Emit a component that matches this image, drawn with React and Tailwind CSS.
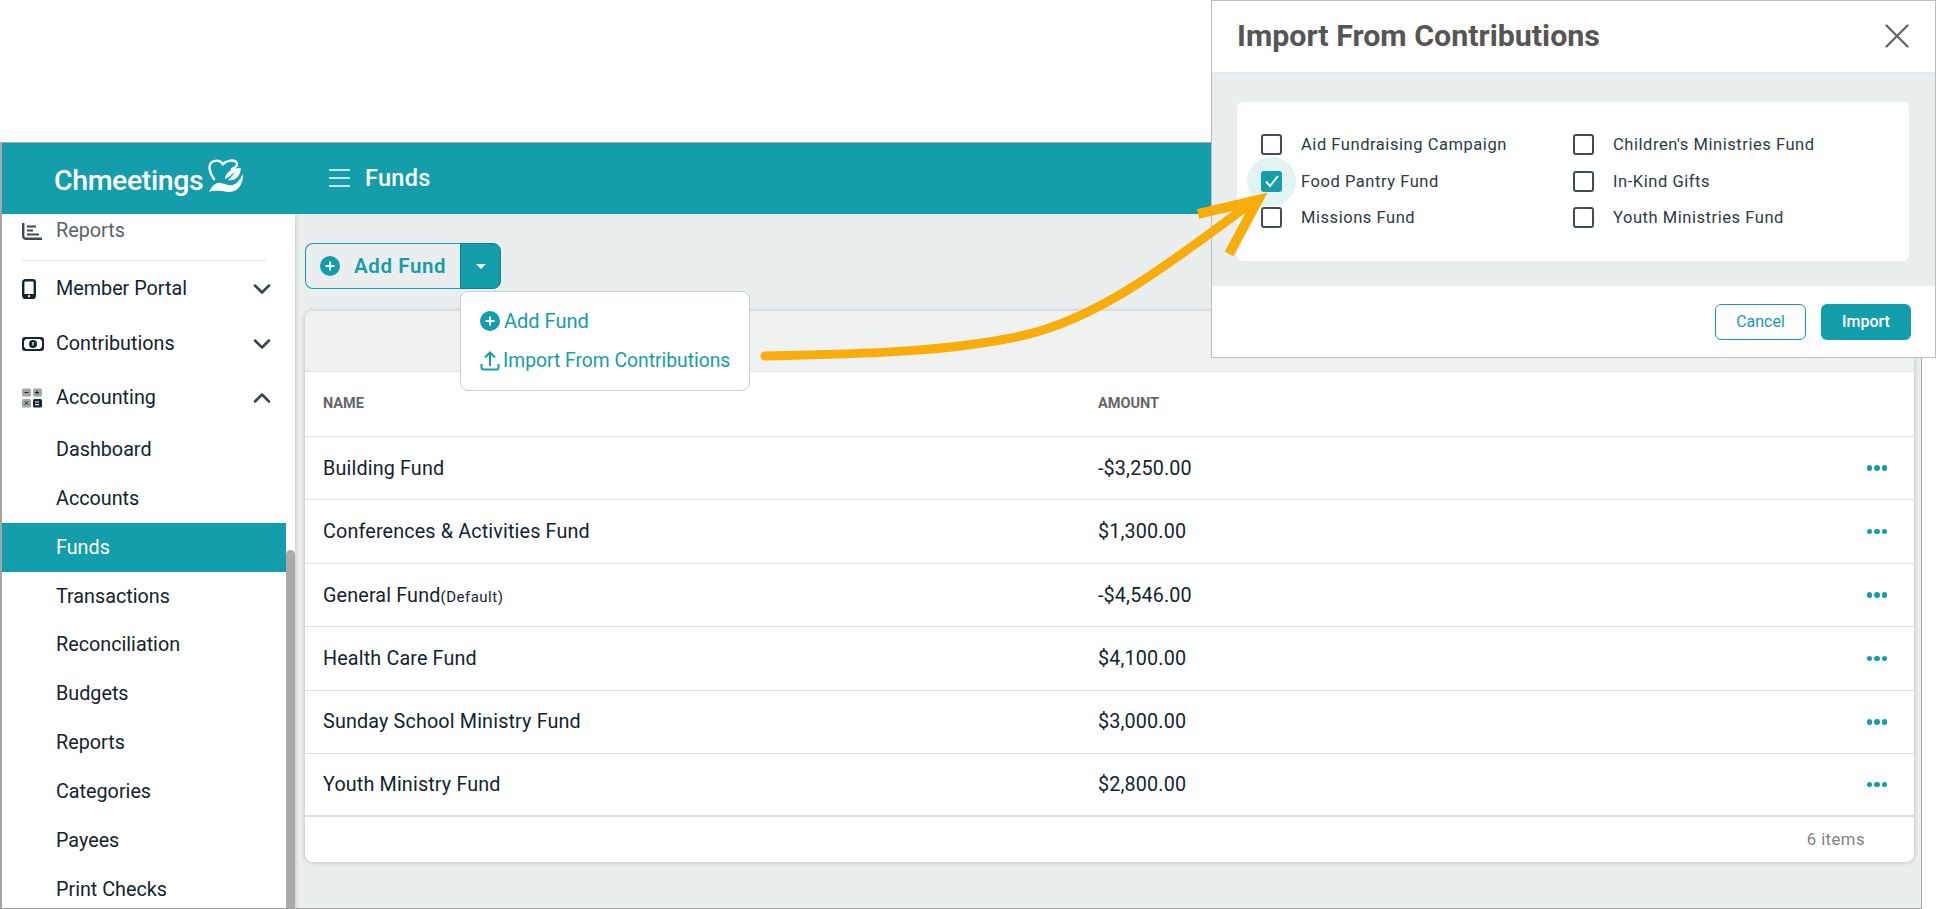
import { ChevronDown, ChevronUp, X } from "lucide-react";

const font = { fontFamily: "Roboto, sans-serif" };

const PlusCircle = ({ className }) => (
  <svg viewBox="0 0 20 20" className={className}>
    <circle cx="10" cy="10" r="10" fill="#149dab" />
    <path d="M10 5.5v9M5.5 10h9" stroke="#fff" strokeWidth="2" />
  </svg>
);

const ReportsIcon = () => (
  <svg viewBox="0 0 20 17" className="w-5 h-[17px]" fill="none" stroke="#3f4a50">
    <path d="M1.2 0v13a2.8 2.8 0 0 0 2.8 2.8h16" strokeWidth="2.4" />
    <path d="M5 3.5h9M5 7.5h6M5 11.5h12" strokeWidth="2.2" />
  </svg>
);

const PhoneIcon = () => (
  <svg viewBox="0 0 20 20" className="w-5 h-5">
    <rect x="1.2" y="1.2" width="11.6" height="17.6" rx="2.2" fill="none" stroke="#15262e" strokeWidth="2.4" />
    <rect x="1" y="15" width="12" height="5" rx="1.5" fill="#15262e" />
    <circle cx="7" cy="17.2" r="1.1" fill="#fff" />
  </svg>
);

const MoneyIcon = () => (
  <svg viewBox="0 0 22 16" className="w-[22px] h-4">
    <rect x="1" y="2" width="20" height="12" rx="2" fill="none" stroke="#15262e" strokeWidth="2" />
    <path d="M1 5l3-3M1 11l3 3M21 5l-3-3M21 11l-3 3" stroke="#15262e" strokeWidth="1.5" />
    <circle cx="11" cy="8" r="4" fill="#15262e" />
    <path d="M11 6v3.5" stroke="#fff" strokeWidth="1.3" />
  </svg>
);

const CalcIcon = () => (
  <svg viewBox="0 0 20 20" className="w-5 h-5">
    <rect x="0" y="0.5" width="9" height="8" rx="1.5" fill="#a3a5a6" />
    <rect x="11" y="0.5" width="9" height="8" rx="1.5" fill="#a3a5a6" />
    <rect x="0" y="11" width="9" height="8.5" rx="1.5" fill="#a3a5a6" />
    <rect x="11" y="11" width="9" height="8.5" rx="1.5" fill="#15262e" />
    <path d="M2.5 4.5h4M13 4.5h4M15 2.5v4M2.8 13.3l3.4 3.4M6.2 13.3l-3.4 3.4" stroke="#15262e" strokeWidth="1" />
    <path d="M13 14h4M13 16.6h4" stroke="#fff" strokeWidth="1.1" />
  </svg>
);

const Logo = () => (
  <div className="flex items-start w-[190px] pt-[15px]">
    <span className="text-[28.5px] leading-[32px] mt-[7px] font-medium text-white tracking-[-0.4px]">
      Chmeetings
    </span>
    <svg viewBox="0 0 36 36" className="w-9 h-9 ml-[5px] mt-0">
      <path d="M6 21C1 14 0 7 4 4c5-3 9-1 11 2 4-4 12-5 14-1 1 3-2 5-5 6" fill="none" stroke="#fff" strokeWidth="2.4" strokeLinecap="round" />
      <path d="M33 10c-7 0-15 3-16 11 5-2 7-5 10-7-2 3-4 6-7 8 7 2 13-4 13-12Z" fill="#fff" />
      <path d="M1 34c3-6 7-10 12-9 4 1 9 3 12 2 5-1 8-7 10-11 1 10-5 19-15 18-8-1-13-2-19 0Z" fill="#fff" />
    </svg>
  </div>
);

const navMain = [
  { label: "Member Portal", icon: <PhoneIcon />, open: false },
  { label: "Contributions", icon: <MoneyIcon />, open: false },
  { label: "Accounting", icon: <CalcIcon />, open: true },
];

const navSub = ["Dashboard", "Accounts", "Funds", "Transactions", "Reconciliation", "Budgets", "Reports", "Categories", "Payees", "Print Checks"];

const Sidebar = () => (
  <aside className="relative w-[293px] shrink-0 bg-white pr-[9px] overflow-hidden shadow-[1px_0_4px_rgba(0,0,0,0.15)] z-[1]">
    <div className="h-[34px] flex items-center pl-[20px] gap-[14px] text-[19.75px] text-[#59636a]">
      <ReportsIcon />
      <span>Reports</span>
    </div>
    <div className="mt-[12px] mb-px ml-[20px] w-[244px] border-t border-[#e2e2e2]" />
    {navMain.map((item) => (
      <div key={item.label} className="h-[54.5px] flex items-center pl-[20px] text-[19.75px] text-[#14232c]">
        <span className="w-[34px] flex">{item.icon}</span>
        <span className="flex-1">{item.label}</span>
        {item.open ? (
          <ChevronUp className="w-[28px] h-[28px] mr-[10px] text-[#3a464d]" strokeWidth={2.2} />
        ) : (
          <ChevronDown className="w-[28px] h-[28px] mr-[10px] text-[#3a464d]" strokeWidth={2.2} />
        )}
      </div>
    ))}
    {navSub.map((label) => (
      <div
        key={label}
        className={`h-[48.85px] flex items-center pl-[54px] text-[19.75px] ${label === "Funds" ? "bg-[#149dab] text-white" : "text-[#14232c]"}`}
      >
        {label}
      </div>
    ))}
    <div className="absolute right-0 top-[336px] bottom-0 w-[9px] rounded-t-full bg-[#a9a9a9]" />
  </aside>
);

const funds = [
  { name: "Building Fund", amount: "-$3,250.00" },
  { name: "Conferences & Activities Fund", amount: "$1,300.00" },
  { name: "General Fund", amount: "-$4,546.00", tag: "(Default)" },
  { name: "Health Care Fund", amount: "$4,100.00" },
  { name: "Sunday School Ministry Fund", amount: "$3,000.00" },
  { name: "Youth Ministry Fund", amount: "$2,800.00" },
];

const FundsTable = () => (
  <div className="mt-[22px] w-[1609px] h-[551px] rounded-lg bg-white shadow-[0_0_5px_rgba(0,0,0,0.22)] overflow-hidden flex flex-col">
    <div className="h-[61px] shrink-0 bg-[#f0f1f1] border-b border-[#e2e2e2]" />
    <div className="h-[65px] shrink-0 flex items-center pl-[18px] border-b border-[#e0e0e0] text-[14.5px] font-bold text-[#666]">
      <span className="w-[775px]">NAME</span>
      <span>AMOUNT</span>
    </div>
    {funds.map((f, i) => (
      <div
        key={f.name}
        className={`h-[63.4px] shrink-0 flex items-center pl-[18px] pr-[27px] text-[19.75px] tracking-[0.15px] text-[#14232c] ${i === 5 ? "border-b-2" : "border-b"} border-[#e0e0e0]`}
      >
        <span className="w-[775px] pt-px">
          {f.name}
          {f.tag && <span className="text-[15px] tracking-[0.5px]">{f.tag}</span>}
        </span>
        <span className="flex-1 pt-px">{f.amount}</span>
        <span className="flex gap-[2px]">
          <i className="w-[5.5px] h-[5.5px] rounded-full bg-[#149dab]" />
          <i className="w-[5.5px] h-[5.5px] rounded-full bg-[#149dab]" />
          <i className="w-[5.5px] h-[5.5px] rounded-full bg-[#149dab]" />
        </span>
      </div>
    ))}
    <div className="flex-1 flex items-center justify-end pr-[49px] text-[16.8px] tracking-[0.4px] text-[#828282]">6 items</div>
  </div>
);

const AddFundMenu = () => (
  <div className="relative w-[196px] h-[46px] flex">
    <button className="flex-1 flex items-center pl-[14px] gap-[14px] rounded-l-lg border border-r-0 border-[#149dab] text-[20.5px] font-semibold tracking-[0.6px] text-[#149dab]">
      <PlusCircle className="w-5 h-5" />
      Add Fund
    </button>
    <button className="w-[41px] flex items-center justify-center rounded-r-lg bg-[#149dab] border border-[#0e7f8b]">
      <span className="border-x-[5px] border-x-transparent border-t-[5px] border-t-white" />
    </button>
    <div className="absolute z-10 left-[155px] top-[48px] w-[290px] h-[100px] rounded-lg border border-[#cfcfcf] bg-white pl-[19px] pt-[19px] text-[#149dab]">
      <div className="flex items-center h-[20px] gap-[4px] text-[20px]">
        <PlusCircle className="w-5 h-5" />
        Add Fund
      </div>
      <div className="flex items-center h-[20px] mt-[20px] gap-[3px] text-[19.3px]">
        <svg viewBox="0 0 20 20" className="w-5 h-5" fill="none" stroke="#149dab" strokeWidth="2">
          <path d="M10 15V2M5 6.5 10 1.5l5 5M1.5 13v3.5a2 2 0 0 0 2 2h13a2 2 0 0 0 2-2V13" />
        </svg>
        Import From Contributions
      </div>
    </div>
  </div>
);

const options = [
  ["Aid Fundraising Campaign", "Children's Ministries Fund"],
  ["Food Pantry Fund", "In-Kind Gifts"],
  ["Missions Fund", "Youth Ministries Fund"],
];

const Check = ({ checked }) =>
  checked ? (
    <span className="relative w-[21px] h-[21px] shrink-0 rounded-[3px] bg-[#149dab] flex items-center justify-center">
      <span className="absolute -inset-[14px] -z-10 rounded-full bg-[#e2f3f4]" />
      <svg viewBox="0 0 16 16" className="w-4 h-4" fill="none" stroke="#fff" strokeWidth="2">
        <path d="M2 8.5 6 13l8-10" />
      </svg>
    </span>
  ) : (
    <span className="w-[21px] h-[21px] shrink-0 rounded-[3px] border-2 border-[#424c52]" />
  );

const ImportModal = () => (
  <div className="absolute z-10 left-[1211px] top-0 w-[725px] h-[358px] border border-[#bdbdbd] bg-white flex flex-col">
    <div className="h-[71px] shrink-0 flex items-center justify-between pl-[25px] pr-[17px] pb-[2px]">
      <h2 className="text-[30.4px] font-bold text-[#555]">Import From Contributions</h2>
      <X className="w-[42px] h-[42px] text-[#666]" strokeWidth={1.4} />
    </div>
    <div className="h-[214px] shrink-0 bg-[#ebeeef] border-t border-[#e4e7e8] px-[25px] pt-[29px]">
      <div className="isolate h-[159px] w-[672px] rounded-md bg-white pl-[24px] pt-[32px]">
        {options.map((row, i) => (
          <div key={i} className="flex h-[36.5px] text-[16.5px] tracking-[0.55px] text-[#2c3a41]">
            {row.map((label) => (
              <div key={label} className="w-[312px] h-[21px] flex items-center gap-[19px]">
                <Check checked={label === "Food Pantry Fund"} />
                <span className="mt-[2px]">{label}</span>
              </div>
            ))}
          </div>
        ))}
      </div>
    </div>
    <div className="flex-1 flex items-start justify-end gap-[15px] pt-[18px] pr-[24px] text-[16px]">
      <button className="w-[91px] h-[36px] rounded-md border border-[#149dab] text-[#149dab]">Cancel</button>
      <button className="w-[90px] h-[36px] rounded-md bg-[#149dab] text-white font-medium">Import</button>
    </div>
  </div>
);

const Arrow = () => (
  <svg viewBox="0 0 1936 909" className="absolute z-20 inset-0 w-[1936px] h-[909px] pointer-events-none" fill="none" stroke="#f9ad0b">
    <path d="M765 356C860 354 950 352 1025 335 1105 316 1180 255 1250 204" strokeWidth="9" strokeLinecap="round" />
    <path d="M1198 214 1258 200 1229 254" strokeWidth="10" />
  </svg>
);

export default function App() {
  return (
    <div className="relative w-[1936px] h-[909px] overflow-hidden bg-white pt-[142px]" style={font}>
      <div className="w-[1922px] h-[767px] border-t border-r border-b border-l-2 border-[#a8a8a8] flex flex-col">
        <header className="h-[71px] shrink-0 bg-[#149dab] flex items-start pl-[52px] z-[2]">
          <Logo />
          <div className="ml-[85px] mt-[25px] flex items-center gap-[15px]">
            <svg viewBox="0 0 21 18" className="w-[21px] h-[18px]" stroke="#fff" strokeWidth="1.6">
              <path d="M0 1h21M0 9h21M0 17h21" />
            </svg>
            <span className="text-[23.5px] leading-[20px] font-medium tracking-[0.3px] text-white">Funds</span>
          </div>
        </header>
        <div className="flex-1 flex min-h-0">
          <Sidebar />
          <main className="flex-1 bg-[#ebeeef] pl-[10px] pt-[29px]">
            <AddFundMenu />
            <FundsTable />
          </main>
        </div>
      </div>
      <ImportModal />
      <Arrow />
    </div>
  );
}
